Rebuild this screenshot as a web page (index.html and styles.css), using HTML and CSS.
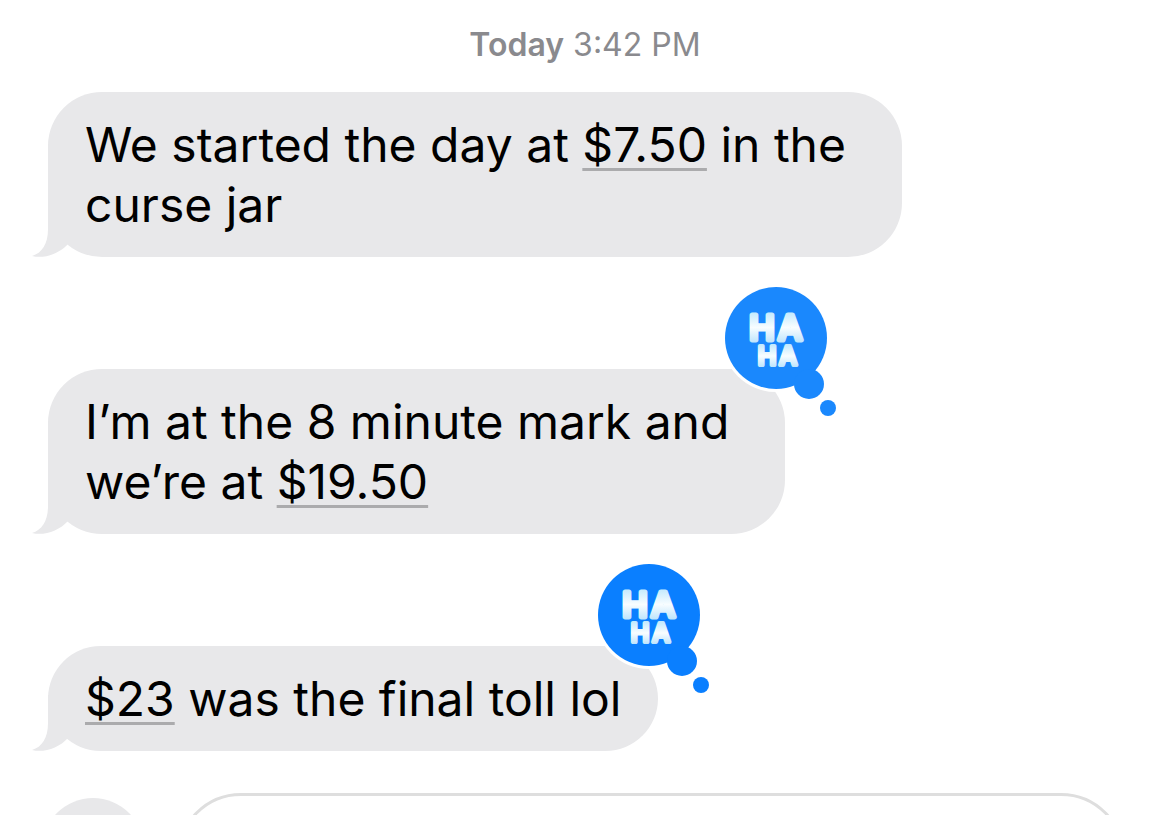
FILE: index.html
```html
<!DOCTYPE html>
<html lang="en">
<head>
    <meta charset="UTF-8">
    <meta name="viewport" content="width=device-width, initial-scale=1.0">
    <title>Messages</title>
    <link rel="stylesheet" href="styles.css">
</head>

<body>
    <!-- shared shapes for tails and reactions -->
    <svg class="defs" aria-hidden="true">
        <defs>
            <linearGradient id="puffy" x1="0" y1="0" x2="0" y2="1">
                <stop offset="0.1" stop-color="#bfe8fd"></stop>
                <stop offset="0.5" stop-color="#f8fdff"></stop>
                <stop offset="0.9" stop-color="#b8e2fc"></stop>
            </linearGradient>
            <symbol id="tail" viewBox="0 0 36 56">
                <path d="M16 0V28C16 43 10 52 0 55C12 58 27 53 36 43V0Z"></path>
            </symbol>
            <symbol id="haha" viewBox="0 0 120 140">
                <circle cx="57" cy="56" r="54" fill="#fff"></circle>
                <circle cx="57" cy="56" r="51"></circle>
                <circle cx="90" cy="102" r="15"></circle>
                <circle cx="109" cy="126" r="8"></circle>
                <text class="ha" x="43 71" y="58" font-size="34" stroke-width="5">HA</text>
                <text class="ha" x="48 69" y="83" font-size="25" stroke-width="4">HA</text>
            </symbol>
        </defs>
    </svg>

    <main class="thread">
        <div class="timestamp"><strong>Today</strong> 3:42 PM</div>

        <div class="bubble multiline">
            We started the day at <a href="#">$7.50</a> in the<br>curse jar
            <svg class="tail"><use href="#tail"></use></svg>
        </div>

        <div class="bubble multiline">
            I’m at the 8 minute mark and<br>we’re at <a href="#">$19.50</a>
            <svg class="tail"><use href="#tail"></use></svg>
            <svg class="reaction light" role="img" aria-label="Haha"><use href="#haha"></use></svg>
        </div>

        <div class="bubble">
            <a href="#">$23</a> was the final toll lol
            <svg class="tail"><use href="#tail"></use></svg>
            <svg class="reaction" role="img" aria-label="Haha"><use href="#haha"></use></svg>
        </div>
    </main>

    <form class="composer">
        <button type="button" class="add" aria-label="Add"></button>
        <input type="text" class="message" aria-label="Message">
    </form>
</body>
</html>
```

FILE: styles.css
```css
* {
    margin: 0;
    padding: 0;
    box-sizing: border-box;
}

body {
    height: 100vh;
    overflow: hidden;
    background: #fff;
    color: #000;
    font-family: Inter, "Liberation Sans", sans-serif;
}

.defs {
    position: absolute;
    width: 0;
    height: 0;
}

.thread {
    display: flex;
    flex-direction: column;
    align-items: flex-start;
    gap: 112px;
    padding: 25px 48px 0;
}

.timestamp {
    align-self: center;
    margin-bottom: -85px;
    font-size: 32px;
    line-height: 40px;
    color: #8a8a8e;
}

.timestamp strong {
    font-weight: 600;
}

.bubble {
    position: relative;
    padding: 23px 37px 22px;
    border-radius: 54px;
    background: #e8e8ea;
    font-size: 48px;
    line-height: 60px;
}

.multiline {
    padding-right: 56px;
}

.bubble a {
    color: inherit;
    text-decoration: underline;
    text-decoration-color: #ababad;
    text-decoration-thickness: 3px;
    text-decoration-skip-ink: none;
    text-underline-offset: 6px;
}

.tail {
    position: absolute;
    left: -16px;
    bottom: 0;
    width: 36px;
    height: 56px;
    fill: #e8e8ea;
}

.reaction {
    position: absolute;
    top: -87px;
    right: -54px;
    width: 120px;
    height: 140px;
    fill: #0a7fff;
}

.reaction.light {
    fill: #1a88fd;
}

.ha {
    font-family: Inter, sans-serif;
    font-weight: 500;
    text-anchor: middle;
    fill: url(#puffy);
    stroke: url(#puffy);
    stroke-linejoin: round;
    stroke-linecap: round;
}

.composer {
    display: flex;
    align-items: flex-start;
    gap: 33px;
    padding: 42px 45px 0 42px;
}

.add {
    flex: none;
    width: 102px;
    height: 102px;
    margin-top: 5px;
    border: none;
    border-radius: 50%;
    background: #e8e8ea;
}

.message {
    flex: 1;
    height: 130px;
    padding: 0 36px;
    border: 3px solid #dedede;
    border-radius: 64px;
    background: #fff;
    font: inherit;
    font-size: 48px;
}
```
